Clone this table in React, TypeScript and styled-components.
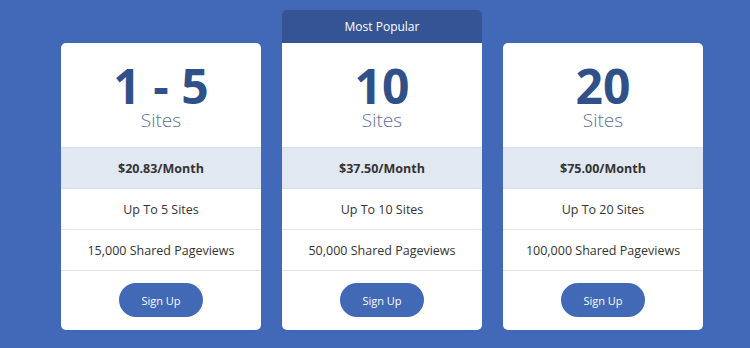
import React from "react";
import styled, { createGlobalStyle } from "styled-components";

const Global = createGlobalStyle`
  html, body { margin: 0; padding: 0; }
  body {
    background: #4169b8;
    font-family: "Open Sans", "Liberation Sans", sans-serif;
    width: 750px;
    height: 348px;
    overflow: hidden;
  }
`;

const Page = styled.div`
  display: flex;
  align-items: flex-end;
  gap: 21px;
  padding: 10px 0 0 61px;
  height: 320px;
  box-sizing: content-box;
`;

const Column = styled.div`
  width: 200px;
  display: flex;
  flex-direction: column;
`;

const Banner = styled.div`
  height: 33px;
  background: #345494;
  border-radius: 5px 5px 0 0;
  color: #ffffff;
  font-size: 12px;
  display: flex;
  align-items: center;
  justify-content: center;
`;

const Card = styled.div<{ $popular?: boolean }>`
  background: #ffffff;
  border-radius: ${(p) => (p.$popular ? "0 0 5px 5px" : "5px")};
  overflow: hidden;
  display: flex;
  flex-direction: column;
  height: 287px;
`;

const Header = styled.div`
  height: 105px;
  padding-top: 20px;
  box-sizing: border-box;
  border-bottom: 1px solid #d6dde8;
  text-align: center;
`;

const Count = styled.div`
  font-size: 48px;
  font-weight: 700;
  line-height: 46px;
  color: #2f5089;
`;

const Unit = styled.div`
  margin-top: 2px;
  font-size: 19px;
  font-weight: 300;
  line-height: 19px;
  color: #5c6f98;
`;

const Row = styled.div<{ $price?: boolean }>`
  height: 40px;
  border-bottom: 1px solid ${(p) => (p.$price ? "#d6dde8" : "#e4e4e4")};
  background: ${(p) => (p.$price ? "#e2e8f1" : "#ffffff")};
  display: flex;
  align-items: center;
  justify-content: center;
  font-size: 12.5px;
  font-weight: ${(p) => (p.$price ? 700 : 400)};
  color: #333333;
`;

const Footer = styled.div`
  flex: 1;
  display: flex;
  justify-content: center;
  padding-top: 12px;
`;

const Button = styled.button`
  width: 84px;
  height: 34px;
  border: none;
  border-radius: 17px;
  background: #4169b5;
  color: #ffffff;
  font-family: "Open Sans", "Liberation Sans", sans-serif;
  font-size: 11px;
  cursor: pointer;
`;

const plans = [
  { count: "1 - 5", price: "$20.83/Month", sites: "Up To 5 Sites", views: "15,000 Shared Pageviews" },
  { count: "10", price: "$37.50/Month", sites: "Up To 10 Sites", views: "50,000 Shared Pageviews", popular: true },
  { count: "20", price: "$75.00/Month", sites: "Up To 20 Sites", views: "100,000 Shared Pageviews" },
];

export default function App() {
  return (
    <>
      <Global />
      <Page>
        {plans.map((p) => (
          <Column key={p.count}>
            {p.popular && <Banner>Most Popular</Banner>}
            <Card $popular={p.popular}>
              <Header>
                <Count>{p.count}</Count>
                <Unit>Sites</Unit>
              </Header>
              <Row $price>{p.price}</Row>
              <Row>{p.sites}</Row>
              <Row>{p.views}</Row>
              <Footer>
                <Button>Sign Up</Button>
              </Footer>
            </Card>
          </Column>
        ))}
      </Page>
    </>
  );
}
